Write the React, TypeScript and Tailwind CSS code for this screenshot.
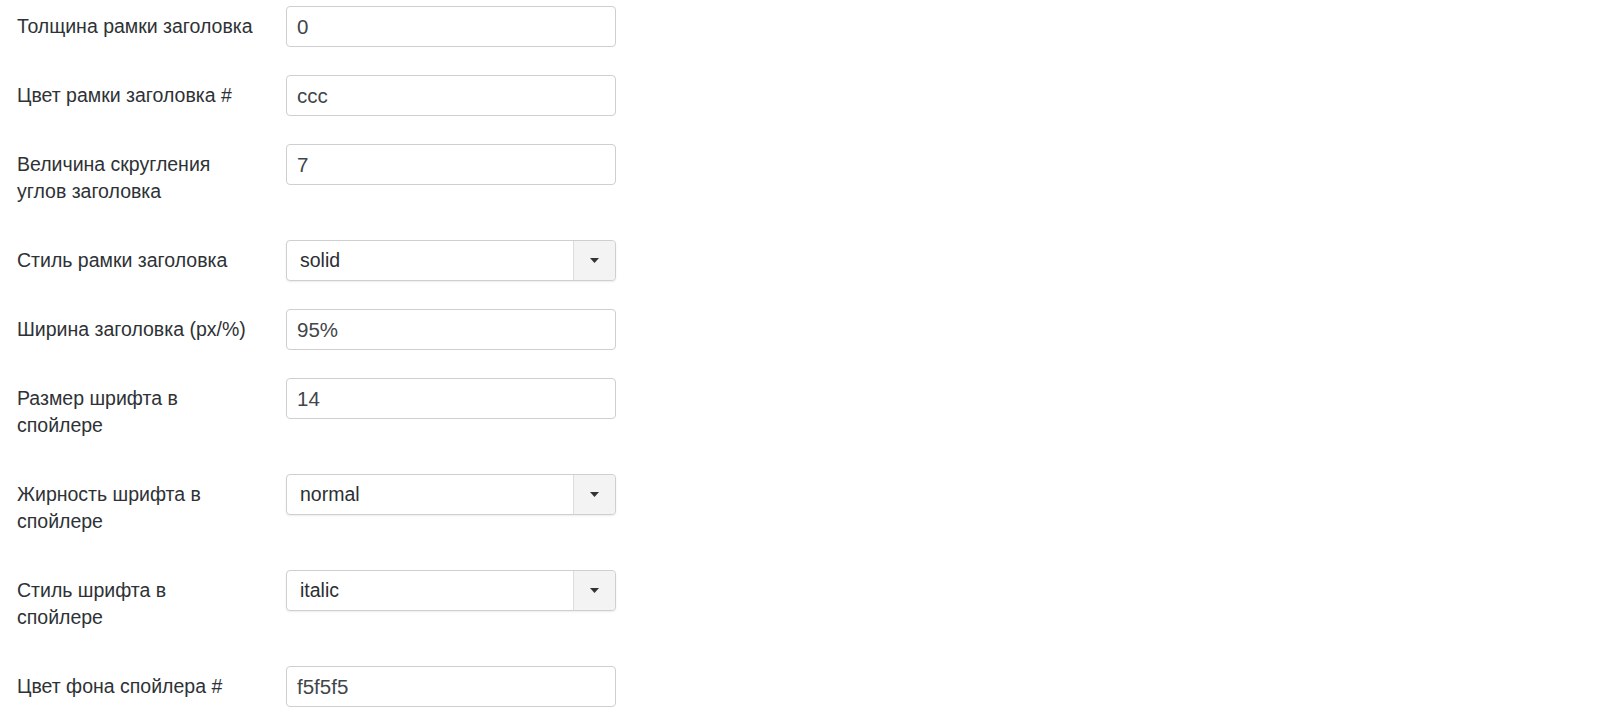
type Field = {
  label: string[];
  value: string;
  select?: boolean;
};

const fields: Field[] = [
  { label: ['Толщина рамки заголовка'], value: '0' },
  { label: ['Цвет рамки заголовка #'], value: 'ccc' },
  { label: ['Величина скругления', 'углов заголовка'], value: '7' },
  { label: ['Стиль рамки заголовка'], value: 'solid', select: true },
  { label: ['Ширина заголовка (px/%)'], value: '95%' },
  { label: ['Размер шрифта в', 'спойлере'], value: '14' },
  { label: ['Жирность шрифта в', 'спойлере'], value: 'normal', select: true },
  { label: ['Стиль шрифта в', 'спойлере'], value: 'italic', select: true },
  { label: ['Цвет фона спойлера #'], value: 'f5f5f5' },
];

const Caret = () => (
  <svg width="9" height="5" viewBox="0 0 9 5" className="block">
    <path d="M0 0 L9 0 L4.5 5 Z" fill="#333" />
  </svg>
);

const App = () => {
  return (
    <div
      className="min-h-screen bg-white pt-[6px] pl-[17px] text-[19.5px] text-[#2e3236]"
      style={{ fontFamily: '"Liberation Sans", Arial, sans-serif' }}
    >
      <div className="flex flex-col gap-[28px]">
        {fields.map((f) => (
          <div key={f.value} className="flex items-start">
            {/* label column */}
            <div className="w-[269px] py-[7px] leading-[27px]">
              {f.label.map((line) => (
                <div key={line}>{line}</div>
              ))}
            </div>

            {f.select ? (
              <div className="flex h-[41px] w-[330px] items-stretch rounded-[4px] border border-[#cfcfcf] bg-white shadow-[0_1px_2px_rgba(0,0,0,0.08)]">
                <div className="flex flex-1 items-center pl-[13px] text-[#2b2f33]">{f.value}</div>
                <div className="flex w-[42px] items-center justify-center rounded-r-[4px] border-l border-[#dcdcdc] bg-[#f3f3f3]">
                  <Caret />
                </div>
              </div>
            ) : (
              <input
                readOnly
                value={f.value}
                className="h-[41px] w-[330px] rounded-[4px] border border-[#cfcfcf] bg-white pl-[10px] text-[20.5px] text-[#41464b] outline-none"
              />
            )}
          </div>
        ))}
      </div>
    </div>
  );
};

export default App;
